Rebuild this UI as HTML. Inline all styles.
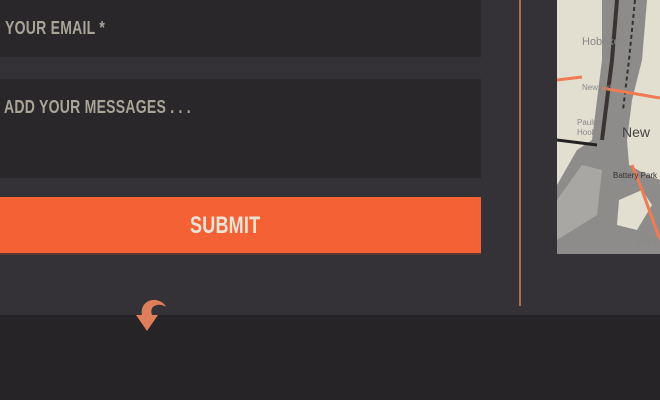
<!DOCTYPE html>
<html><head><style>
body{margin:0;width:660px;height:400px;overflow:hidden;background:#343236;position:relative;font-family:"Liberation Sans",sans-serif}
.f{position:absolute;left:0;width:481px;background:#29272a}
.t{position:absolute;font-weight:bold;color:#a9a498;font-size:18px;transform:scaleX(.78);transform-origin:left top;white-space:nowrap;letter-spacing:.3px}
</style></head><body>
<div class="f" style="top:0;height:57px"></div>
<div class="t" style="left:5px;top:18px">YOUR EMAIL *</div>
<div class="f" style="top:79px;height:99px"></div>
<div class="t" style="left:4px;top:97px">ADD YOUR MESSAGES . . .</div>
<div style="position:absolute;left:0;top:197px;width:481px;height:56px;background:#f46134;border-bottom:2px solid #5a3a30"></div>
<div class="t" style="left:190px;top:212px;font-size:24px;color:#eae4d6;transform:scaleX(.75)">SUBMIT</div>
<div style="position:absolute;left:519px;top:0;width:2px;height:306px;background:#b06a50"></div>
<div style="position:absolute;left:0;top:315px;width:660px;height:85px;background:#262426"></div>
<svg style="position:absolute;left:557px;top:0" width="103" height="254" viewBox="0 0 103 254">
<rect width="103" height="254" fill="#e2ded0"/>
<path d="M45 0 L90 0 L85 60 L75 100 L70 140 L72 165 L90 175 L103 180 L103 254 L0 254 L0 185 L20 150 L35 140 L40 100 L45 60 Z" fill="#8e8c8a"/>
<path d="M0 200 L25 165 L45 170 L40 215 L0 240Z" fill="#a9a7a4"/>
<path d="M62 200 L85 190 L95 205 L80 230 L60 225Z" fill="#e2ded0"/>
<path d="M60 0 L55 60 L50 100 L45 140" stroke="#3a3533" stroke-width="4" fill="none"/>
<path d="M78 0 L72 60 L66 110" stroke="#333" stroke-width="2" stroke-dasharray="4 3" fill="none"/>
<path d="M0 80 L25 77 M45 88 L103 98 M75 165 L85 190 L103 240" stroke="#f07a52" stroke-width="3" fill="none"/>
<path d="M0 140 L40 145" stroke="#222" stroke-width="3"/>
<text x="25" y="45" font-size="11" fill="#888">Hoboken</text>
<text x="25" y="90" font-size="8" fill="#888">Newport</text>
<text x="20" y="125" font-size="8" fill="#888">Paulus</text>
<text x="20" y="135" font-size="8" fill="#888">Hook</text>
<text x="65" y="137" font-size="14" fill="#444">New</text>
<text x="56" y="178" font-size="8" fill="#333">Battery Park</text>
<text x="80" y="244" font-size="8" fill="#888">Red Ho</text>
</svg>
<svg style="position:absolute;left:134px;top:297px" width="34" height="36" viewBox="0 0 34 36">
<path d="M8 18 C6 8 14 2 22 3 C27 4 31 7 32 10 C28 7 22 7 19 10 C17 12 17 15 18 18 L24 18 L13 34 L2 18 Z" fill="#e07e5c"/>
</svg>
</body></html>
